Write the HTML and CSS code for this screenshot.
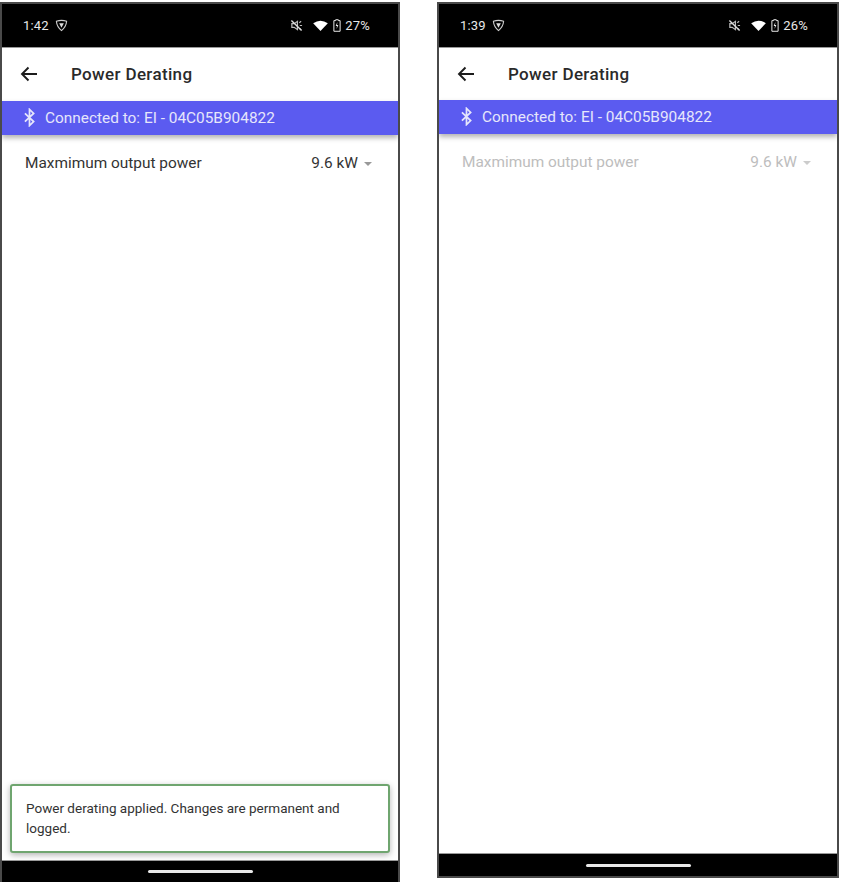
FILE: index.html
```html
<!DOCTYPE html>
<html>
<head>
<title>Power Derating</title>
<link rel="stylesheet" href="styles.css">
</head>
<body>
<div class="phone phone-left">
	<div class="status-bar">
		<div class="status-side">
			<span>1:42</span>
			<svg class="shield" viewBox="0 0 14 14"><path d="M1.500 2.500 Q7 .5 12.500 2.500 Q12 8.500 7 12.500 Q2 8.500 1.500 2.500 Z" fill="none" stroke="#ccc" stroke-width="1.200"/><path d="M4.500 4.500 H9.500 L7 9.500 Z" fill="#ddd"/></svg>
		</div>
		<div class="status-side">
			<svg class="mute" viewBox="0 0 14 14"><path d="M2 5 H4.500 L8 2.500 V11.500 L4.500 9 H2 Z M10 4 L12 2.500 M10.500 7 H13 M10 10 L12 11.500" fill="none" stroke="#bbb" stroke-width="1.300"/><path d="M1.500 1.500 L12.500 12.500" stroke="#ddd" stroke-width="1.500"/></svg>
			<svg class="wifi" viewBox="0 0 16 12"><path d="M0 3.500 Q8 -2 16 3.500 L8 12 Z" fill="#fff"/></svg>
			<svg class="battery" viewBox="0 0 9 14"><path d="M3 .5 H6 V1.500 H8 V13.500 H1 V1.500 H3 Z" fill="none" stroke="#eee" stroke-width="1.100"/><path d="M5 3 L3 7.500 H4.500 L4 11 L6 6.500 H4.500 Z" fill="#eee"/></svg>
			<span>27%</span>
		</div>
	</div>
	<div class="app-bar">
		<svg class="back" viewBox="0 0 18 16"><path d="M17 8 H2 M8.500 1.500 L2 8 L8.500 14.500" fill="none" stroke="#1c1c1c" stroke-width="1.900"/></svg>
		<span class="title">Power Derating</span>
	</div>
	<div class="banner">
		<svg class="bt" viewBox="0 0 12 20"><path d="M1 5.500 L10.500 14.500 L6 18.800 V1.200 L10.500 5.500 L1 14.500" fill="none" stroke="#e6e6fb" stroke-width="1.900"/></svg>
		<span>Connected to: EI - 04C05B904822</span>
	</div>
	<div class="content">
		<div class="row">
			<span>Maxmimum output power</span>
			<span class="value">9.6 kW <i class="caret"></i></span>
		</div>
		<div class="toast">Power derating applied. Changes are permanent and logged.</div>
	</div>
	<div class="nav-bar"><div class="home-pill"></div></div>
</div>

<div class="phone phone-right">
	<div class="status-bar">
		<div class="status-side">
			<span>1:39</span>
			<svg class="shield" viewBox="0 0 14 14"><path d="M1.500 2.500 Q7 .5 12.500 2.500 Q12 8.500 7 12.500 Q2 8.500 1.500 2.500 Z" fill="none" stroke="#ccc" stroke-width="1.200"/><path d="M4.500 4.500 H9.500 L7 9.500 Z" fill="#ddd"/></svg>
		</div>
		<div class="status-side">
			<svg class="mute" viewBox="0 0 14 14"><path d="M2 5 H4.500 L8 2.500 V11.500 L4.500 9 H2 Z M10 4 L12 2.500 M10.500 7 H13 M10 10 L12 11.500" fill="none" stroke="#bbb" stroke-width="1.300"/><path d="M1.500 1.500 L12.500 12.500" stroke="#ddd" stroke-width="1.500"/></svg>
			<svg class="wifi" viewBox="0 0 16 12"><path d="M0 3.500 Q8 -2 16 3.500 L8 12 Z" fill="#fff"/></svg>
			<svg class="battery" viewBox="0 0 9 14"><path d="M3 .5 H6 V1.500 H8 V13.500 H1 V1.500 H3 Z" fill="none" stroke="#eee" stroke-width="1.100"/><path d="M5 3 L3 7.500 H4.500 L4 11 L6 6.500 H4.500 Z" fill="#eee"/></svg>
			<span>26%</span>
		</div>
	</div>
	<div class="app-bar">
		<svg class="back" viewBox="0 0 18 16"><path d="M17 8 H2 M8.500 1.500 L2 8 L8.500 14.500" fill="none" stroke="#1c1c1c" stroke-width="1.900"/></svg>
		<span class="title">Power Derating</span>
	</div>
	<div class="banner">
		<svg class="bt" viewBox="0 0 12 20"><path d="M1 5.500 L10.500 14.500 L6 18.800 V1.200 L10.500 5.500 L1 14.500" fill="none" stroke="#e6e6fb" stroke-width="1.900"/></svg>
		<span>Connected to: EI - 04C05B904822</span>
	</div>
	<div class="content">
		<div class="row row-disabled">
			<span>Maxmimum output power</span>
			<span class="value">9.6 kW <i class="caret"></i></span>
		</div>
	</div>
	<div class="nav-bar"><div class="home-pill"></div></div>
</div>
</body>
</html>
```

FILE: styles.css
```css
html, body { margin: 0; padding: 0; background: white; }
body { display: flex; align-items: flex-start; gap: 37px; padding-top: 2px; height: 880px; overflow: hidden; font-family: "Roboto", "Liberation Sans", sans-serif; color: #2b2b2b; }

.phone { display: flex; flex-direction: column; box-sizing: border-box; border: 2px solid #4a4a4a; background: white; overflow: hidden; }
.phone-left { width: 400px; height: 880px; border-bottom: 0; }
.phone-right { width: 402px; height: 876px; }

.status-bar { flex: none; height: 44px; box-sizing: border-box; background: black; color: #e8e8e8; font-size: 13px; display: flex; align-items: center; justify-content: space-between; padding: 0 28px 1px 21px; border-bottom: 1px solid #999; }
.phone-right .status-bar { padding-right: 29px; }
.status-side { display: flex; align-items: center; gap: 5px; }
.status-side span { letter-spacing: 0.2px; }
.shield { width: 13px; height: 13px; margin-left: 1px; }
.mute { width: 13px; height: 13px; margin-right: 5px; }
.wifi { width: 15px; height: 11px; }
.battery { width: 8px; height: 13px; margin-right: -1px; }

.app-bar { height: 53px; flex: none; display: flex; align-items: center; padding: 0 0 1px 18px; box-sizing: border-box; }
.phone-right .app-bar { height: 52px; }
.back { width: 18px; height: 16px; }
.title { margin-left: 33px; font-size: 17px; letter-spacing: 0.35px; font-weight: 500; color: #2a2a2a; }

.banner { height: 34px; flex: none; box-sizing: border-box; display: flex; align-items: center; padding: 0 0 1px 22px; background: #5b5bf0; color: #e6e6fb; font-size: 15.400px; box-shadow: 0 3px 5px rgba(0, 0, 0, 0.3); position: relative; }
.bt { width: 11px; height: 19px; margin-right: 10px; }

.content { flex: 1; display: flex; flex-direction: column; justify-content: space-between; min-height: 0; }
.row { display: flex; justify-content: space-between; align-items: center; padding: 18px 26px 0 23px; font-size: 15.400px; color: #333; line-height: 20px; }
.value { display: flex; align-items: center; gap: 6px; }
.caret { width: 0; height: 0; border-left: 4.500px solid transparent; border-right: 4.500px solid transparent; border-top: 4.500px solid #999; margin-top: 1px; }
.row-disabled { color: #bdbdbd; }
.row-disabled .caret { border-top-color: #ccc; }

.toast { margin: 0 8px 7px; padding: 12px 14px; font-size: 13.500px; line-height: 20px; color: #333; border: 2px solid #6fa56f; border-radius: 3px; background: white; box-shadow: 0 2px 6px rgba(0, 0, 0, 0.3); box-sizing: border-box; height: 69px; }

.nav-bar { height: 21px; flex: none; background: black; display: flex; align-items: center; justify-content: center; border-top: 1px solid #999; }
.phone-right .nav-bar { height: 22px; }
.home-pill { width: 105px; height: 3px; border-radius: 2px; background: #e8e8e8; }
```
